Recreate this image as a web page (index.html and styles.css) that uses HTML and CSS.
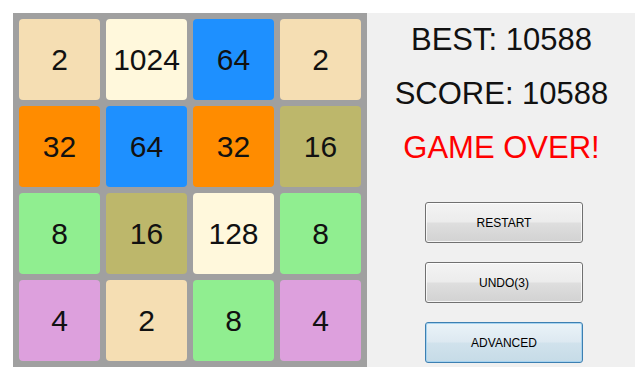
FILE: index.html
```html
<!DOCTYPE html>
<html>
<head>
<meta charset="utf-8">
<link rel="stylesheet" href="styles.css">
</head>
<body>
<div class="app">
  <div class="board">
    <div class="tile t2">2</div>
    <div class="tile t1024">1024</div>
    <div class="tile t64">64</div>
    <div class="tile t2">2</div>
    <div class="tile t32">32</div>
    <div class="tile t64">64</div>
    <div class="tile t32">32</div>
    <div class="tile t16">16</div>
    <div class="tile t8">8</div>
    <div class="tile t16">16</div>
    <div class="tile t128">128</div>
    <div class="tile t8">8</div>
    <div class="tile t4">4</div>
    <div class="tile t2">2</div>
    <div class="tile t8">8</div>
    <div class="tile t4">4</div>
  </div>
  <div class="panel">
    <div class="line">BEST: 10588</div>
    <div class="line">SCORE: 10588</div>
    <div class="line over">GAME OVER!</div>
    <div class="buttons">
      <button class="btn">RESTART</button>
      <button class="btn">UNDO(3)</button>
      <button class="btn focused">ADVANCED</button>
    </div>
  </div>
</div>
</body>
</html>
```
FILE: styles.css
```css
html, body {
  margin: 0;
  padding: 0;
  background: #ffffff;
}
.app {
  display: flex;
  margin: 13px 0 0 13px;
  height: 354px;
  font-family: "Liberation Sans", Arial, sans-serif;
}
.board {
  display: grid;
  grid-template-columns: repeat(4, 81px);
  grid-template-rows: repeat(4, 81px);
  gap: 6px;
  padding: 6px;
  background: #a0a0a0;
}
.tile {
  border-radius: 4px;
  display: flex;
  align-items: center;
  justify-content: center;
  font-size: 30px;
  color: #111;
}
.t2 { background: #f5deb3; }
.t4 { background: #dda0dd; }
.t8 { background: #90ee90; }
.t16 { background: #bdb76b; }
.t32 { background: #ff8c00; }
.t64 { background: #1e90ff; }
.t128 { background: #fff8dc; }
.t1024 { background: #fff8dc; }
.panel {
  width: 268px;
  background: #f0f0f0;
  display: flex;
  flex-direction: column;
}
.line {
  font-size: 31px;
  line-height: 54px;
  text-align: center;
  color: #111;
  padding-left: 1px;
}
.over {
  color: #ff0000;
}
.buttons {
  display: flex;
  flex-direction: column;
  gap: 19px;
  padding: 27px 0 0 58px;
}
.btn {
  width: 158px;
  height: 41px;
  border: 1px solid #707070;
  border-radius: 3px;
  background: linear-gradient(#f3f3f3 0%, #ececec 48%, #dedede 52%, #d2d2d2 100%);
  box-shadow: inset 0 0 0 1px rgba(255,255,255,0.75);
  font-family: "Liberation Sans", Arial, sans-serif;
  font-size: 12px;
  color: #000;
  padding: 0;
  margin: 0;
}
.focused {
  border-color: #3c7fb1;
  background: linear-gradient(#eaf3f8 0%, #dde9f1 48%, #d0e2ec 52%, #c6dbe7 100%);
  box-shadow: inset 0 0 0 1px #a6d3f0;
}
```
